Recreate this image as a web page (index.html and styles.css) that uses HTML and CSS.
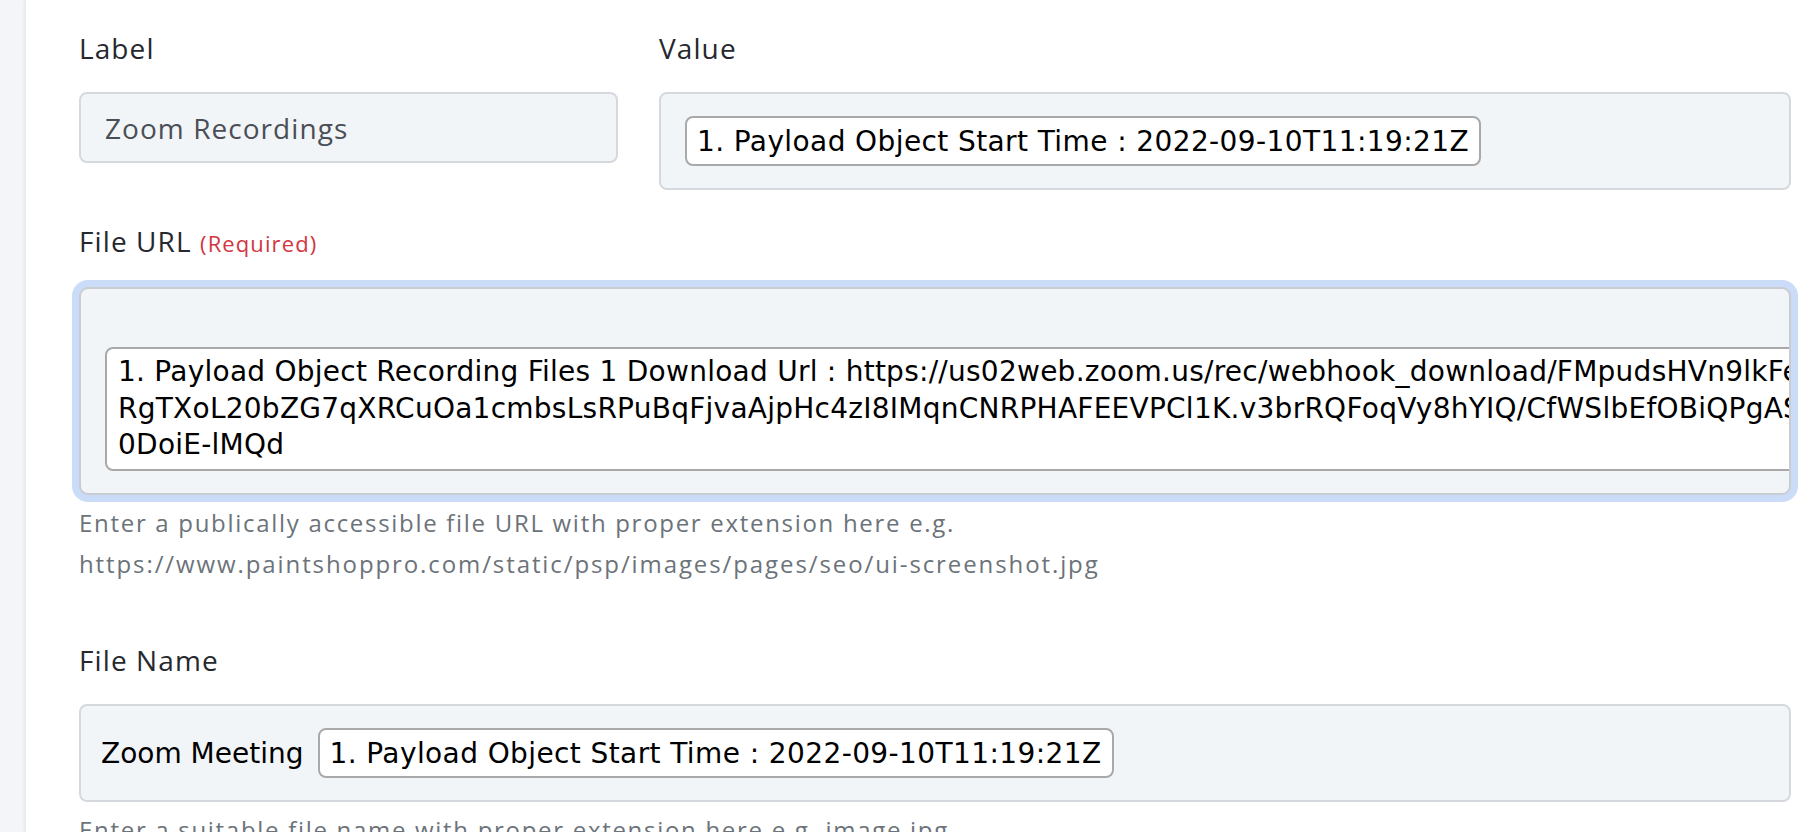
FILE: index.html
```html
<!DOCTYPE html>
<html lang="en">
<head>
<meta charset="utf-8">
<title>Upload file</title>
<link rel="stylesheet" href="styles.css">
</head>
<body>
<div class="app">
  <aside class="rail"></aside>
  <main class="panel">
    <div class="pair">
      <div class="field">
        <label class="field-label">Label</label>
        <div class="static-box">Zoom Recordings</div>
      </div>
      <div class="field">
        <label class="field-label">Value</label>
        <div class="mapper">
          <span class="token">1. Payload Object Start Time : 2022-09-10T11:19:21Z</span>
        </div>
      </div>
    </div>

    <div class="field">
      <label class="field-label">File URL <span class="required">(Required)</span></label>
      <div class="mapper mapper--focused mapper--tall">
        <div class="token-area">
          <div class="token-line">1. Payload Object Recording Files 1 Download Url : https://us02web.zoom.us/rec/webhook_download/FMpudsHVn9lkFe</div>
          <div class="token-line">RgTXoL20bZG7qXRCuOa1cmbsLsRPuBqFjvaAjpHc4zI8IMqnCNRPHAFEEVPCl1K.v3brRQFoqVy8hYIQ/CfWSlbEfOBiQPgASk</div>
          <div class="token-line">0DoiE-lMQd</div>
        </div>
      </div>
      <p class="hint">Enter a publically accessible file URL with proper extension here e.g.<br><span class="hint-url">https://www.paintshoppro.com/static/psp/images/pages/seo/ui-screenshot.jpg</span></p>
    </div>

    <div class="field">
      <label class="field-label">File Name</label>
      <div class="mapper mapper--inline">
        <span class="plain">Zoom Meeting</span>
        <span class="token">1. Payload Object Start Time : 2022-09-10T11:19:21Z</span>
      </div>
      <p class="hint">Enter a suitable file name with proper extension here e.g. image.jpg</p>
    </div>
  </main>
</div>
</body>
</html>
```

FILE: styles.css
```css
* {
  box-sizing: border-box;
}

html,
body {
  margin: 0;
  height: 100%;
  background: #ffffff;
  overflow: hidden;
}

body {
  font-family: "Open Sans", "Liberation Sans", sans-serif;
  color: #212529;
}

.app {
  display: flex;
  width: 1798px;
  height: 832px;
}

/* narrow side rail to the left of the form */
.rail {
  flex: 0 0 26px;
  background: #f3f5f8;
}

.panel {
  flex: 1;
  min-width: 0;
  padding: 28px 7px 0 53px;
  background: #ffffff;
  box-shadow: -2px 0 3px rgba(30, 40, 60, 0.06);
  display: flex;
  flex-direction: column;
  gap: 31px;
}

.pair {
  display: grid;
  grid-template-columns: 539px 1fr;
  column-gap: 41px;
  align-items: start;
}

.field {
  display: flex;
  flex-direction: column;
  min-width: 0;
}

.field-label {
  display: block;
  font-size: 28px;
  line-height: 40px;
  font-weight: 400;
  letter-spacing: 1.1px;
  color: #25292e;
  margin-bottom: 24px;
}

.required {
  font-size: 22px;
  letter-spacing: 1.1px;
  color: #d2363f;
}

.static-box {
  height: 71px;
  display: flex;
  align-items: center;
  padding: 0 24px;
  background: #f2f5f8;
  border: 2px solid #d5d9de;
  border-radius: 8px;
  font-size: 28px;
  letter-spacing: 1.05px;
  color: #4a4f56;
}

/* container holding mapped value tokens */
.mapper {
  background: #f2f5f8;
  border: 2px solid #d5d9de;
  border-radius: 8px;
  padding: 22px 24px;
  overflow: hidden;
}

.mapper--inline {
  display: flex;
  align-items: center;
  padding: 22px 20px;
  gap: 14px;
}

.mapper--focused {
  border-color: #c9cdd2;
  box-shadow: 0 0 0 7px #cadcf7;
  border-radius: 9px;
}

.mapper--tall {
  padding: 58px 0 22px 24px;
}

.token,
.plain,
.token-area {
  font-family: "DejaVu Sans", "Verdana", sans-serif;
  font-size: 28px;
  color: #000000;
}

.token {
  display: inline-flex;
  align-items: center;
  height: 50px;
  padding: 0 10px;
  background: #ffffff;
  border: 2px solid #a9a9a9;
  border-radius: 8px;
  white-space: nowrap;
  letter-spacing: 0.4px;
}

.plain {
  white-space: nowrap;
}

.token-area {
  width: 2000px;
  height: 124px;
  padding: 5px 11px;
  background: #ffffff;
  border: 2px solid #a9a9a9;
  border-radius: 8px;
  line-height: 36.5px;
  letter-spacing: 0.25px;
}

.token-line {
  white-space: nowrap;
}

.hint {
  margin: 7px 0 25px;
  font-size: 24px;
  line-height: 41px;
  letter-spacing: 1.7px;
  color: #6c737a;
}

.hint-url {
  letter-spacing: 1.9px;
}
```
